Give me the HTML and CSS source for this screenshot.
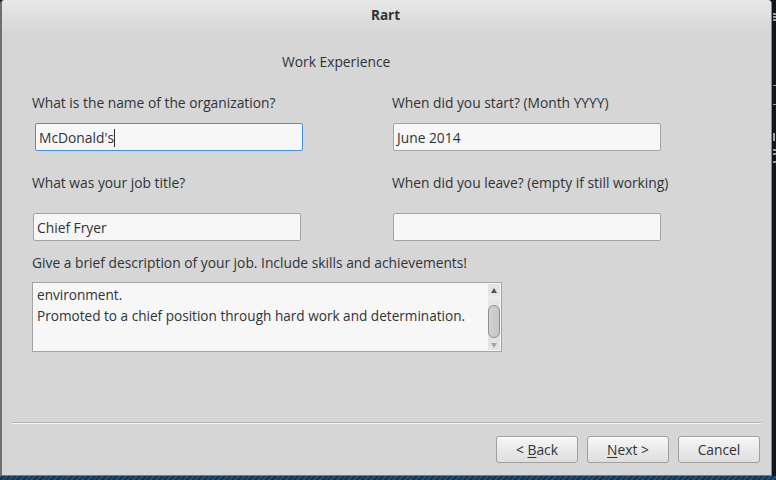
FILE: index.html
```html
<!DOCTYPE html>
<html>
<head>
<meta charset="utf-8">
<link rel="stylesheet" href="styles.css">
</head>
<body>
<div class="screen">
  <div class="toprow">
    <div class="window">
      <div class="titlebar">Rart</div>
      <div class="content">
        <div class="heading">Work Experience</div>
        <div class="grid">
          <div class="field">
            <div class="label">What is the name of the organization?</div>
            <div class="entry focused">McDonald's<span class="caret"></span></div>
          </div>
          <div class="field">
            <div class="label">When did you start? (Month YYYY)</div>
            <div class="entry">June 2014</div>
          </div>
          <div class="field second">
            <div class="label">What was your job title?</div>
            <div class="entry">Chief Fryer</div>
          </div>
          <div class="field second">
            <div class="label">When did you leave? (empty if still working)</div>
            <div class="entry"></div>
          </div>
        </div>
        <div class="label desc-label">Give a brief description of your job. Include skills and achievements!</div>
        <div class="textarea">
          <div class="text">
            <div class="line">environment.</div>
            <div class="line">Promoted to a chief position through hard work and determination.</div>
          </div>
          <div class="scrollbar">
            <div class="arrow up"></div>
            <div class="trough"><div class="slider"></div></div>
            <div class="arrow down"></div>
          </div>
        </div>
      </div>
      <div class="separator"></div>
      <div class="buttons">
        <div class="btn">&lt; <u>B</u>ack</div>
        <div class="btn"><u>N</u>ext &gt;</div>
        <div class="btn">Cancel</div>
      </div>
    </div>
    <div class="desk">
      <span class="mark m1"></span>
      <span class="mark m2"></span>
      <span class="mark m3"></span>
      <span class="mark m4"></span>
      <span class="mark m5"></span>
    </div>
  </div>
  <div class="stripes"></div>
</div>
</body>
</html>
```
FILE: styles.css
```css
html, body {
  margin: 0;
  padding: 0;
  background: #0b1418;
}
body {
  font-family: "Open Sans", "DejaVu Sans", sans-serif;
  font-size: 13.8px;
  color: #2e3436;
}
.screen {
  width: 776px;
  height: 480px;
  display: flex;
  flex-direction: column;
  overflow: hidden;
}
.toprow {
  display: flex;
  height: 476px;
}
.window {
  width: 771px;
  height: 475px;
  background: #d6d6d6;
  border-left: 2px solid #6f6f6f;
  border-right: 1px solid #8a8a8a;
  border-bottom: 1px solid #7a7a7a;
  border-radius: 4px 4px 0 0;
  display: flex;
  flex-direction: column;
}
.titlebar {
  height: 31px;
  line-height: 30px;
  text-align: center;
  font-weight: bold;
  font-size: 13.5px;
  color: #2e3436;
  background: linear-gradient(#e8e8e8, #d7d7d7);
  border-radius: 4px 4px 0 0;
  padding-right: 2px;
}
.content {
  padding-left: 30px;
  height: 391px;
}
.heading {
  padding-left: 250px;
  margin-top: 21px;
  line-height: 20px;
  height: 20px;
}
.grid {
  margin-top: 21px;
  display: grid;
  grid-template-columns: 360px 360px;
}
.label {
  line-height: 20px;
  height: 20px;
  white-space: nowrap;
}
.entry {
  margin-top: 10px;
  margin-left: 1px;
  width: 263px;
  height: 26px;
  line-height: 27px;
  padding-left: 3px;
  box-sizing: content-box;
  background: #f7f7f7;
  border: 1px solid #a3a3a3;
  border-radius: 2px;
  white-space: nowrap;
}
.entry.focused {
  margin-left: 3px;
  border-color: #4a90d9;
}
.caret {
  display: inline-block;
  width: 1px;
  height: 18px;
  background: #2e3436;
  vertical-align: -4px;
}
.field.second {
  margin-top: 22px;
}
.field.second .entry {
  margin-top: 20px;
}
.desc-label {
  margin-top: 12px;
}
.textarea {
  margin-top: 9px;
  width: 468px;
  height: 68px;
  background: #f7f7f7;
  border: 1px solid #a3a3a3;
  display: flex;
}
.text {
  flex: 1;
  padding: 1px 0 0 4px;
  font-size: 13.6px;
}
.line {
  line-height: 21px;
  height: 21px;
  white-space: nowrap;
}
.scrollbar {
  width: 12px;
  margin: 1px 1px 1px 0;
  background: #e4e4e4;
  display: flex;
  flex-direction: column;
  align-items: center;
}
.arrow {
  width: 0;
  height: 0;
  border-left: 3px solid transparent;
  border-right: 3px solid transparent;
  margin: 4px 0 3px;
}
.arrow.up {
  border-bottom: 5px solid #555;
}
.arrow.down {
  border-top: 5px solid #a5a5a5;
  margin: 3px 0 3px;
}
.trough {
  flex: 1;
  width: 12px;
  background: linear-gradient(#ececec, #e0e0e0 30%);
  display: flex;
  flex-direction: column;
  justify-content: center;
}
.slider {
  height: 33px;
  margin: 9px 0 2px 0;
  background: linear-gradient(90deg, #d2d2d2, #c6c6c6);
  border: 1px solid #8e8e8e;
  border-radius: 6px;
  box-sizing: border-box;
}
.separator {
  margin: 0 10px 0 10px;
  height: 1px;
  background: #b2b2b2;
  border-bottom: 1px solid #f6f6f6;
}
.buttons {
  display: flex;
  justify-content: flex-end;
  gap: 9px;
  padding: 12px 11px 0 0;
}
.btn {
  width: 80px;
  height: 25px;
  line-height: 25px;
  text-align: center;
  border: 1px solid #a0a0a0;
  border-radius: 3px;
  background: linear-gradient(#f6f6f6, #dedede);
  box-shadow: inset 0 1px 0 #ffffff;
}
.btn u {
  text-decoration-thickness: 1px;
  text-underline-offset: 2px;
}
.desk {
  flex: 1;
  background: #0d171c;
  display: flex;
  flex-direction: column;
  padding-left: 1px;
}
.mark {
  display: block;
  width: 3px;
  background: #9aa3a6;
}
.m1 { height: 2px; margin-top: 13px; box-shadow: 0 3px 0 #9aa3a6, 0 6px 0 #9aa3a6; }
.m2 { height: 1px; margin-top: 70px; }
.m3 { height: 1px; margin-top: 18px; }
.m4 { height: 8px; width: 2px; margin-top: 28px; }
.m5 { height: 2px; margin-top: 8px; box-shadow: 0 4px 0 #9aa3a6, 0 12px 0 #9aa3a6; }
.stripes {
  height: 4px;
  background: repeating-linear-gradient(135deg, #1b4f78 0 2px, #0e3553 2px 4px);
}
```
